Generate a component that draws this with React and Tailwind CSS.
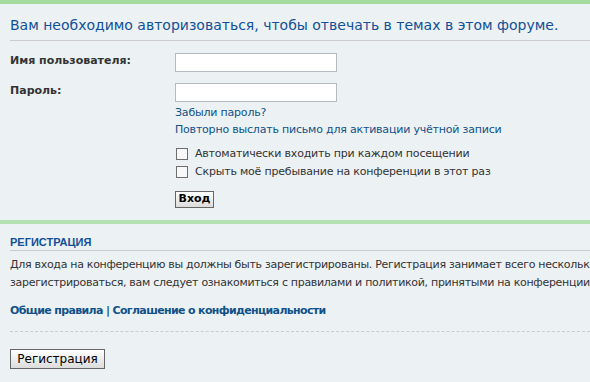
export default function App() {
  return (
    <div className="h-[382px] w-[590px] overflow-hidden bg-[#ecf1f3] font-['DejaVu_Sans',sans-serif] text-[#333]">
      <div className="border-t-4 border-[#a6dba0] pl-[10px] pt-[12px]">
        <h2 className="whitespace-nowrap border-b border-[#ccc] pb-[6px] text-[14px] font-normal leading-[18px] text-[#115098]">
          Вам необходимо авторизоваться, чтобы отвечать в темах в этом форуме.
        </h2>

        <div className="mt-[12px] flex">
          <label className="w-[165px] pt-[1px] text-[11px] font-bold leading-[13px]">Имя пользователя:</label>
          <input type="text" className="h-[19px] w-[162px] border border-[#b4bac0] bg-white outline-none" />
        </div>
        <div className="mt-[11px] flex">
          <label className="w-[165px] pt-[1px] text-[11px] font-bold leading-[13px]">Пароль:</label>
          <input type="password" className="h-[19px] w-[162px] border border-[#b4bac0] bg-white outline-none" />
        </div>

        <div className="ml-[165px] mt-[2px] text-[11px] leading-[17px] tracking-[-0.2px] text-[#105289]">
          <a href="#">Забыли пароль?</a>
          <br />
          <a href="#">Повторно выслать письмо для активации учётной записи</a>
        </div>

        <div className="ml-[166px] mt-[7px] text-[11px] tracking-[-0.2px]">
          <Check label="Автоматически входить при каждом посещении" />
          <Check label="Скрыть моё пребывание на конференции в этот раз" />
        </div>

        <div className="ml-[165px] mt-[10px]">
          <button className="flex h-[17px] w-[39px] items-center justify-center border border-[#666] bg-gradient-to-b from-white to-[#dcdcdc] text-[11px] font-bold text-black">
            Вход
          </button>
        </div>
      </div>

      <div className="mt-[12px] border-t-4 border-[#b3e2b0] pl-[10px] pt-[10px]">
        <h3 className="border-b border-[#ccc] font-['Liberation_Sans',sans-serif] text-[11px] font-bold uppercase leading-[16px] text-[#115098]">
          Регистрация
        </h3>
        <p className="mt-[5px] whitespace-nowrap text-[11px] leading-[18px] tracking-[-0.3px]">
          Для входа на конференцию вы должны быть зарегистрированы. Регистрация занимает всего несколько секунд, но увеличивает ваши возможности.
          <br />
          зарегистрироваться, вам следует ознакомиться с правилами и политикой, принятыми на конференции. Убедитесь, что вы прочитали все правила.
        </p>
        <p className="mt-[10px] text-[11px] font-bold leading-[18px] tracking-[-0.65px] text-[#105289]">
          <a href="#">Общие правила</a> | <a href="#">Соглашение о конфиденциальности</a>
        </p>
        <div className="mt-[11px] border-t border-dashed border-[#ccc]" />
        <button className="mt-[17px] h-[20px] w-[95px] border border-[#666] bg-gradient-to-b from-white to-[#dcdcdc] text-[12px] leading-[18px] text-black">
          Регистрация
        </button>
      </div>
    </div>
  );
}

function Check({ label }) {
  return (
    <div className="flex h-[18px] items-center">
      <span className="h-[12px] w-[12px] border border-[#6d6d6d] bg-[#f8f8f8]" />
      <span className="ml-[7px]">{label}</span>
    </div>
  );
}
